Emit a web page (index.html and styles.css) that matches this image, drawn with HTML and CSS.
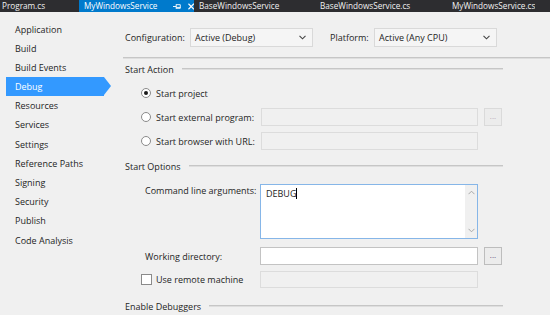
FILE: index.html
```html
<!DOCTYPE html>
<html lang="en">
<head>
    <meta charset="UTF-8">
    <title>MyWindowsService - Debug</title>
    <link rel="stylesheet" href="styles.css">
</head>
<body>
    <div class="tabs">
        <div class="tab tab-program">Program.cs</div>
        <div class="tab tab-active">
            <span>MyWindowsService</span>
            <svg class="pin" width="9" height="7" viewBox="0 0 9 7">
                <path d="M0 3.5H3.5M3.5 1V6M3.5 1.5H8V5.5H3.5M3.5 4.5H8" fill="none" stroke="#fff" stroke-width="1"/>
            </svg>
            <svg class="close" width="7" height="7" viewBox="0 0 7 7">
                <path d="M0.5 0.5L6.5 6.5M6.5 0.5L0.5 6.5" stroke="#fff" stroke-width="1.2"/>
            </svg>
        </div>
        <div class="tab tab-base">BaseWindowsService</div>
        <div class="tab tab-base-cs">BaseWindowsService.cs</div>
        <div class="tab">MyWindowsService.cs</div>
    </div>

    <div class="page">
        <ul class="nav">
            <li>Application</li>
            <li>Build</li>
            <li>Build Events</li>
            <li class="active">Debug</li>
            <li>Resources</li>
            <li>Services</li>
            <li>Settings</li>
            <li>Reference Paths</li>
            <li>Signing</li>
            <li>Security</li>
            <li>Publish</li>
            <li>Code Analysis</li>
        </ul>

        <div class="props">
            <div class="config-row">
                <label class="config-label">Configuration:</label>
                <div class="select">
                    <span>Active (Debug)</span>
                    <svg width="7" height="5" viewBox="0 0 7 5"><path d="M0.5 0.8L3.5 3.8L6.5 0.8" fill="none" stroke="#444" stroke-width="1.1"/></svg>
                </div>
                <label class="platform-label">Platform:</label>
                <div class="select">
                    <span>Active (Any CPU)</span>
                    <svg width="7" height="5" viewBox="0 0 7 5"><path d="M0.5 0.8L3.5 3.8L6.5 0.8" fill="none" stroke="#444" stroke-width="1.1"/></svg>
                </div>
            </div>
            <div class="separator"></div>

            <div class="section">
                <div class="heading">Start Action</div>
                <div class="row radio-row first">
                    <div class="choice"><span class="radio checked"></span>Start project</div>
                </div>
                <div class="row radio-row">
                    <div class="choice"><span class="radio"></span>Start external program:</div>
                    <div class="textbox disabled"></div>
                    <div class="browse disabled">...</div>
                </div>
                <div class="row radio-row">
                    <div class="choice"><span class="radio"></span>Start browser with URL:</div>
                    <div class="textbox disabled"></div>
                </div>

                <div class="heading options">Start Options</div>
                <div class="row args-row">
                    <div class="field-label">Command line arguments:</div>
                    <div class="textarea">
                        <div class="textarea-text">DEBUG<span class="caret"></span></div>
                        <div class="scrollbar">
                            <svg width="7" height="5" viewBox="0 0 7 5"><path d="M0.5 4.2L3.5 1.2L6.5 4.2" fill="none" stroke="#a8a8a8" stroke-width="1"/></svg>
                            <svg width="7" height="5" viewBox="0 0 7 5"><path d="M0.5 0.8L3.5 3.8L6.5 0.8" fill="none" stroke="#a8a8a8" stroke-width="1"/></svg>
                        </div>
                    </div>
                </div>
                <div class="row dir-row">
                    <div class="field-label">Working directory:</div>
                    <div class="textbox"></div>
                    <div class="browse">...</div>
                </div>
                <div class="row remote-row">
                    <div class="choice"><span class="checkbox"></span>Use remote machine</div>
                    <div class="textbox disabled"></div>
                </div>

                <div class="heading debuggers">Enable Debuggers</div>
            </div>
        </div>
    </div>
</body>
</html>
```

FILE: styles.css
```css
body {
    margin: 0;
    width: 550px;
    height: 315px;
    overflow: hidden;
    background-color: #f0f0f0;
    color: #1e1e1e;
    font-family: 'Open Sans', sans-serif;
    font-size: 9px;
}

/* Document tabs */
.tabs {
    display: flex;
    height: 12px;
    background-color: #2d2d30;
    color: #f1f1f1;
    font-size: 8.2px;
    line-height: 12px;
    white-space: nowrap;
    overflow: hidden;
}

.tab {
    flex: none;
    padding-left: 5px;
    overflow: hidden;
}

.tab-program {
    width: 77px;
    padding-left: 2px;
}

.tab-active {
    display: flex;
    align-items: center;
    width: 110px;
    background-color: #007acc;
    color: #fff;
}

.tab-active .pin {
    margin-left: 16px;
}

.tab-active .close {
    margin-left: 6px;
}

.tab-base {
    width: 116px;
}

.tab-base-cs {
    width: 127px;
}

/* Layout */
.page {
    display: flex;
}

.nav {
    list-style: none;
    margin: 0;
    padding: 7.5px 0 0;
    width: 123px;
    flex: none;
}

.nav li {
    position: relative;
    margin-left: 6px;
    width: 89px;
    padding-left: 9px;
    height: 19.2px;
    line-height: 19.2px;
}

.nav li.active {
    background-color: #3399ff;
    color: #fff;
}

.nav li.active::after {
    content: '';
    position: absolute;
    top: 0;
    right: -7px;
    border-left: 7px solid #3399ff;
    border-top: 9.6px solid transparent;
    border-bottom: 9.6px solid transparent;
}

.props {
    flex: 1;
    padding: 16px 0 0 2px;
}

.config-row {
    display: flex;
    align-items: center;
    height: 19px;
}

.config-label {
    width: 65px;
}

.platform-label {
    width: 44px;
    margin-left: 17px;
}

.select {
    display: flex;
    align-items: center;
    justify-content: space-between;
    box-sizing: border-box;
    width: 123px;
    height: 19px;
    padding: 0 6px 0 4px;
    border: 1px solid #d9d9d9;
    background-color: #f5f5f5;
}

.separator {
    margin: 10px 0 0 -2px;
    border-top: 1px solid #c6c6c6;
    border-bottom: 1px solid #dedede;
}

/* Property sections */
.section {
    width: 378px;
}

.heading {
    display: flex;
    align-items: center;
    height: 14px;
    margin-top: 3px;
}

.heading::after {
    content: '';
    flex: 1;
    margin-left: 8px;
    border-top: 1px solid #c6c6c6;
    border-bottom: 1px solid #dedede;
}

.heading.options {
    margin-top: 6px;
}

.heading.debuggers {
    margin-top: 11px;
}

.row {
    display: grid;
    grid-template-columns: 130px 217px 18px;
    column-gap: 6px;
    align-items: center;
}

.radio-row {
    height: 24px;
}

.radio-row.first {
    margin-top: 5px;
}

.choice {
    display: flex;
    align-items: center;
    padding-left: 16px;
    white-space: nowrap;
}

.radio {
    box-sizing: border-box;
    width: 10px;
    height: 10px;
    margin-right: 5px;
    border: 1px solid #8a8a8a;
    border-radius: 50%;
    background-color: #fff;
    position: relative;
}

.radio.checked::after {
    content: '';
    position: absolute;
    top: 2px;
    left: 2px;
    width: 4px;
    height: 4px;
    border-radius: 50%;
    background-color: #1a1a1a;
}

.checkbox {
    box-sizing: border-box;
    width: 11px;
    height: 11px;
    margin-right: 4px;
    border: 1px solid #8a8a8a;
    background-color: #fff;
}

.textbox {
    box-sizing: border-box;
    height: 18px;
    border: 1px solid #c3c3c3;
    background-color: #fff;
}

.textbox.disabled {
    border-color: #dcdcdc;
    background-color: #f0f0f0;
}

.browse {
    box-sizing: border-box;
    height: 18px;
    border: 1px solid #bdbdbd;
    background-color: #ececec;
    color: #5a4a7a;
    font-size: 8px;
    line-height: 14px;
    text-align: center;
}

.browse.disabled {
    border-color: #dadada;
    color: #b8a8b8;
}

.field-label {
    padding-left: 20px;
    white-space: nowrap;
}

.args-row {
    margin-top: 11px;
    align-items: start;
}

.args-row .field-label {
    line-height: 14px;
}

.textarea {
    display: flex;
    box-sizing: border-box;
    height: 55px;
    margin-left: -1px;
    border: 1px solid #86b6e8;
    background-color: #fff;
}

.textarea-text {
    flex: 1;
    padding: 2px 5px;
    line-height: 14px;
}

.caret {
    display: inline-block;
    width: 1px;
    height: 11px;
    vertical-align: -2px;
    background-color: #000;
}

.scrollbar {
    display: flex;
    flex-direction: column;
    align-items: center;
    justify-content: space-between;
    width: 12px;
    padding: 5px 0;
    background-color: #f0f0f0;
}

.dir-row {
    margin-top: 8px;
}

.dir-row .textbox {
    margin-left: -1px;
}

.remote-row {
    margin-top: 6px;
}

.remote-row .textbox {
    height: 17px;
    margin-left: -1px;
}
```
